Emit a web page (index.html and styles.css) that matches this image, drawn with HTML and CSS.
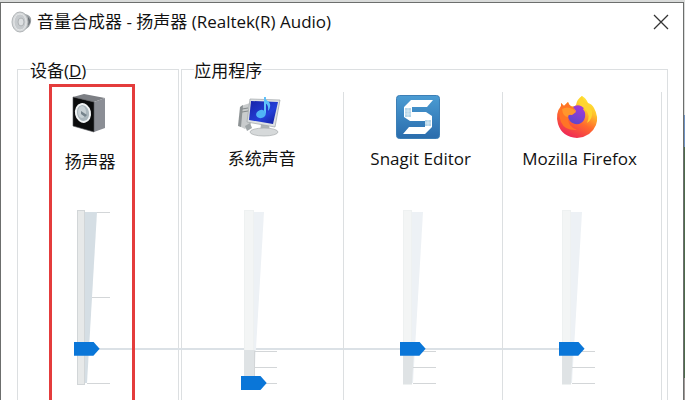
FILE: index.html
```
<!DOCTYPE html>
<html lang="zh-CN">
<head>
<meta charset="UTF-8">
<meta name="viewport" content="width=device-width, initial-scale=1">
<title>音量合成器</title>
<link rel="stylesheet" href="styles.css">
</head>
<body>

<div class="window">
  <header class="titlebar">
    <svg class="titlebar-icon" viewBox="0 0 22 22" aria-hidden="true">
      <path d="M9 1 L17 4 Q21 6 20 11 Q19 16 15 18 L9 21 Z" fill="#9ca1a5"/>
      <path d="M17 6 Q20 9 19 12 L16 16 Z" fill="#6b7176"/>
      <ellipse cx="9" cy="11" rx="8" ry="10" fill="#d5d8da" stroke="#b0b4b6"/>
      <ellipse cx="9" cy="11" rx="6" ry="8" fill="#c6cacd" stroke="#e4e6e7"/>
      <ellipse cx="10" cy="11" rx="3" ry="4" fill="#dde0e2" stroke="#aeb2b5"/>
    </svg>
    <h1>音量合成器 - 扬声器 (Realtek(R) Audio)</h1>
    <button class="close" type="button" aria-label="关闭">
      <svg viewBox="0 0 16 16"><path d="M1 1 L15 15 M15 1 L1 15" stroke="#333" stroke-width="1.3"/></svg>
    </button>
  </header>

  <main class="mixer">
    <fieldset class="group device">
      <legend>设备(<u>D</u>)</legend>
      <div class="columns">
        <div class="channel">
          <div class="highlight"></div>
          <svg class="icon" viewBox="0 0 44 46" aria-hidden="true">
            <path d="M3 3 L14 0 L35 4 L24 8 Z" fill="#7c7f84"/>
            <path d="M24 8 L35 4 L35 34 L24 38 Z" fill="#8b8e95"/>
            <path d="M3 3 L24 8 L24 38 L3 32 Z" fill="#0b0c0d" stroke="#55585c" stroke-width="0.6"/>
            <ellipse cx="13" cy="19" rx="8" ry="10" transform="rotate(-12 13 19)" fill="#f0f3f4"/>
            <ellipse cx="13" cy="19" rx="6" ry="8" transform="rotate(-12 13 19)" fill="#abb7bd"/>
            <ellipse cx="12" cy="18" rx="4" ry="6" fill="#c8d1d5"/>
            <path d="M11 17 L17 21 L15 23 L11 20 Z" fill="#75838b"/>
          </svg>
          <label class="name" for="vol-device">扬声器</label>
          <div class="slider-row">
            <div class="slider">
              <svg class="scale" viewBox="0 0 36 185" aria-hidden="true">
                <path class="wedge" d="M11 7 H23 L13 178 H11 Z"/>
                <rect class="track" x="3.5" y="5.5" width="7" height="174"/>
                <path class="ticks" d="M23 7.5 H36 M18 92.5 H36 M13 178.5 H36"/>
              </svg>
              <input id="vol-device" type="range" min="0" max="100" value="20">
            </div>
          </div>
        </div>
      </div>
    </fieldset>

    <fieldset class="group apps">
      <legend>应用程序</legend>
      <div class="columns">
        <div class="channel">
          <svg class="icon" viewBox="0 0 44 46" aria-hidden="true">
            <defs>
              <linearGradient id="screen" x1="0" y1="0" x2="1" y2="1">
                <stop offset="0" stop-color="#1723a8"/>
                <stop offset="0.6" stop-color="#2440d8"/>
                <stop offset="1" stop-color="#101a96"/>
              </linearGradient>
            </defs>
            <path d="M4 12 L13 9 L14 30 L8 35 L2 32 Z" fill="#c9cccd"/>
            <path d="M3 13 L6 11 L4 33 L1 32 Z" fill="#8d9294"/>
            <path d="M5 15 L11 14 M5 18 L11 17" stroke="#858a8c"/>
            <path d="M8 32 L13 29 L15 34 L10 37 Z" fill="#a0a6a8"/>
            <path d="M24 30 L32 31 L33 38 L23 38 Z" fill="#aeb4b6"/>
            <ellipse cx="27" cy="38" rx="14" ry="4" fill="#d6d9da" stroke="#a7acae" stroke-width="0.7"/>
            <path d="M13 5 L43 6 L38 33 L10 28 Z" fill="#dee1e3" stroke="#9da3a6" stroke-width="0.7"/>
            <path d="M14 7 L41 8 L36 30 L12 26 Z" fill="url(#screen)"/>
            <path d="M28 3 L28 19" stroke="#62c3fb" stroke-width="2"/>
            <path d="M27 3 Q29 6 32 8 Q35 12 31 17 Q32 11 28 9 Z" fill="#5bbefa"/>
            <ellipse cx="24" cy="20" rx="5" ry="4" transform="rotate(-20 24 20)" fill="#50b4f6"/>
          </svg>
          <label class="name" for="vol-system">系统声音</label>
          <div class="slider-row">
            <div class="slider">
              <svg class="scale" viewBox="0 0 36 185" aria-hidden="true">
                <path class="wedge" d="M11 7 H23 L13 178 H11 Z"/>
                <rect class="track" x="3.5" y="5.5" width="9" height="174"/>
                <path class="level" d="M3 145 H14 L13 179 H3 Z"/>
                <path class="ticks" d="M13 146.5 H36 M13 162.5 H36 M13 178.5 H36 M13.5 146 V178"/>
              </svg>
              <input id="vol-system" type="range" min="0" max="100" value="0">
            </div>
          </div>
        </div>

        <div class="channel">
          <svg class="icon" viewBox="0 0 44 46" aria-hidden="true">
            <defs>
              <linearGradient id="snagit" x1="0" y1="0" x2="0" y2="1">
                <stop offset="0" stop-color="#4b9cd3"/>
                <stop offset="1" stop-color="#2a6cac"/>
              </linearGradient>
            </defs>
            <rect x="0.5" y="1.5" width="43" height="43" rx="3" fill="url(#snagit)" stroke="#3c7fb6"/>
            <path d="M15 6 H37 L31 13 H16 V18 H30 L36 22 V33 L29 40 H7 L13 33 H29 V27 H14 L8 23 V13 Z" fill="#fff"/>
            <path d="M9 14 H15 V23 H9 Z M29 26 H35 V32 H29 Z" fill="#b5d5e8"/>
            <path d="M9 17 H15 M9 20 H15 M12 14 V23 M29 29 H35 M32 26 V32" stroke="#e8f3f9" stroke-width="0.6"/>
          </svg>
          <label class="name" for="vol-snagit">Snagit Editor</label>
          <div class="slider-row">
            <div class="slider">
              <svg class="scale" viewBox="0 0 36 185" aria-hidden="true">
                <path class="wedge" d="M11 7 H23 L13 178 H11 Z"/>
                <rect class="track" x="3.5" y="5.5" width="8" height="174"/>
                <path class="level" d="M3 145 H14 L12 179 H3 Z"/>
                <path class="ticks" d="M13 146.5 H36 M13 162.5 H36 M13 178.5 H36"/>
              </svg>
              <input id="vol-snagit" type="range" min="0" max="100" value="20">
            </div>
          </div>
        </div>

        <div class="channel">
          <svg class="icon" viewBox="0 0 44 46" aria-hidden="true">
            <defs>
              <linearGradient id="fox" x1="0.8" y1="0" x2="0.3" y2="1">
                <stop offset="0" stop-color="#fff03c"/>
                <stop offset="0.3" stop-color="#ffc32b"/>
                <stop offset="0.6" stop-color="#ff6a2d"/>
                <stop offset="1" stop-color="#ee2459"/>
              </linearGradient>
              <linearGradient id="globe" x1="0.7" y1="0" x2="0.3" y2="1">
                <stop offset="0" stop-color="#a53ad8"/>
                <stop offset="1" stop-color="#5b47c9"/>
              </linearGradient>
            </defs>
            <path d="M27 2 Q31 4 33 9 Q37 10 39 14 Q44 23 41 31 Q36 43 22 44 Q7 43 3 30 Q0 19 6 12 L6 9 L9 12 L13 8 Q14 11 16 12 Q20 13 21 11 Q22 5 27 2 Z" fill="url(#fox)"/>
            <path d="M6 9 L9 12 L13 8 Q14 12 19 14 L20 17 Q16 18 13 22 Q12 32 22 36 Q10 37 6 28 Q3 20 6 12 Z" fill="#ff7426"/>
            <path d="M18 13 Q22 10 26 12 L30 13 L28 15 Q32 20 29 26 Q26 31 20 30 Q13 28 13 21 L18 20 L21 17 Z" fill="url(#globe)"/>
            <path d="M7 15 Q12 12 18 15 L21 18 L17 21 Q13 20 13 23 Q8 23 7 15 Z" fill="#ff962c"/>
            <path d="M30 15 Q36 21 32 29 Q38 25 37 17 L33 9 Q28 8 27 2 Q21 7 25 11 Z" fill="#ffd52f"/>
          </svg>
          <label class="name" for="vol-firefox">Mozilla Firefox</label>
          <div class="slider-row">
            <div class="slider">
              <svg class="scale" viewBox="0 0 36 185" aria-hidden="true">
                <path class="wedge" d="M11 7 H23 L13 178 H11 Z"/>
                <rect class="track" x="3.5" y="5.5" width="8" height="174"/>
                <path class="level" d="M3 145 H14 L12 179 H3 Z"/>
                <path class="ticks" d="M13 146.5 H36 M13 162.5 H36 M13 178.5 H36"/>
              </svg>
              <input id="vol-firefox" type="range" min="0" max="100" value="20">
            </div>
          </div>
        </div>
      </div>
    </fieldset>
  </main>
</div>

</body>
</html>
```
FILE: styles.css
```
* {
  box-sizing: border-box;
}
body {
  margin: 0;
  padding: 2px 1px 0 0;
  min-height: 100vh;
  /* desktop showing behind the window edge */
  background: linear-gradient(#d9dbda 115px, #6f93c4 115px, #6f93c4 147px, #4d6b4c 147px, #4d6b4c 378px, #a09a98 378px);
  color: #111;
  font-family: "Open Sans", "Noto Sans CJK SC", sans-serif;
  font-size: 17px;
  line-height: 24px;
}
.window {
  display: flex;
  flex-direction: column;
  min-height: calc(100vh - 2px);
  background: #fff;
  border: 1px solid #6c6e6d;
  border-bottom: none;
}

/* title bar */
.titlebar {
  flex: none;
  display: flex;
  align-items: center;
  height: 38px;
  padding: 0 14px 0 10px;
}
.titlebar-icon {
  width: 22px;
  height: 22px;
}
h1 {
  flex: 1;
  margin: 0 0 0 4px;
  font-size: 17px;
  font-weight: normal;
}
.close {
  display: flex;
  padding: 0;
  border: none;
  background: none;
}
.close svg {
  width: 16px;
  height: 16px;
}

/* groups */
.mixer {
  flex: 1;
  display: grid;
  grid-template-columns: 1fr 3fr;
  gap: 2px;
  padding: 14px 15px 0 16px;
}
.group {
  min-width: 0;
  margin: 0;
  padding: 0;
  border: 1px solid #dcdfe1;
  border-bottom: none;
}
legend {
  margin-left: 12px;
  padding: 4px 0 0;
}
.columns {
  display: flex;
  margin-top: 9px;
}
.channel {
  position: relative;
  flex: 1;
  display: flex;
  flex-direction: column;
  align-items: center;
  padding-top: 2px;
}
.device .columns {
  margin-right: 13px;
}
.apps .columns {
  padding: 0 5px 0 3px;
}
.apps .channel {
  padding-right: 11px;
  border-right: 1px solid #dcdfe1;
}
.highlight {
  position: absolute;
  top: -8px;
  bottom: 0;
  left: calc(50% - 43px);
  z-index: 2;
  width: 86px;
  border: 3px solid #e43c3c;
  border-bottom: none;
}
.icon {
  width: 44px;
  height: 46px;
}
.name {
  margin-top: 7px;
  white-space: nowrap;
}
.device .name {
  margin-top: 10px;
  margin-bottom: -3px;
  padding-right: 3px;
}
.apps .name {
  padding-left: 6px;
}

/* sliders */
.slider-row {
  display: flex;
  justify-content: center;
  align-self: stretch;
  margin-top: 34px;
  padding-bottom: 10px;
}
.slider-row::before {
  content: "";
  position: absolute;
  right: 0;
  left: 0;
  margin-top: 143px;
  height: 2px;
  background: #dbe1e6;
}
.device .slider-row::before {
  right: -20px;
  left: 50%;
}
.channel:last-child:not(:first-child) .slider-row::before {
  right: 60%;
}
.slider {
  position: relative;
  display: grid;
  width: 36px;
  height: 185px;
}
.scale,
.slider input {
  grid-area: 1 / 1;
}
.scale {
  width: 36px;
  height: 185px;
}
.wedge {
  fill: #d5dee4;
}
.track {
  fill: #e7e9e9;
  stroke: #d2d6d8;
}
.ticks {
  fill: none;
  stroke: #d3d6d8;
}
.apps .wedge {
  fill: #edf1f5;
}
.apps .track {
  fill: #f3f5f5;
  stroke: #eef1f1;
}
.level {
  fill: #dfe3e5;
}
.slider input {
  writing-mode: vertical-lr;
  direction: rtl;
  appearance: none;
  width: 26px;
  height: 185px;
  margin: 0;
  background: none;
}
.slider input::-webkit-slider-thumb {
  appearance: none;
  width: 26px;
  height: 14px;
  background: #0a76d8;
  clip-path: polygon(0 0, 76% 0, 100% 50%, 76% 100%, 0 100%);
}
```
